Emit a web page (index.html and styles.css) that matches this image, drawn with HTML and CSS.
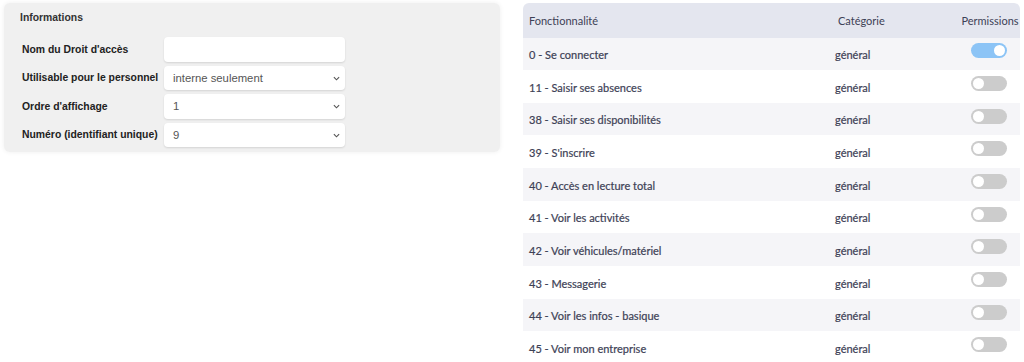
FILE: index.html
```html
<!DOCTYPE html>
<html lang="fr">
<head>
<meta charset="UTF-8">
<meta name="viewport" content="width=device-width, initial-scale=1.0">
<title>Droit d'accès</title>
<link rel="stylesheet" href="styles.css">
</head>
<body>
<div class="page">
 <!-- Informations -->
 <div class="panel">
 <h3 class="panel-title">Informations</h3>
 <div class="form">
 <label class="form-label" for="nom">Nom du Droit d'accès</label>
 <input class="field" id="nom" type="text" value="">

 <label class="form-label" for="usage">Utilisable pour le personnel</label>
 <div class="select">
 <select class="field" id="usage"><option>interne seulement</option></select>
 <svg class="chevron" viewBox="0 0 8 5"><path d="M1 1 L4 4 L7 1" /></svg>
 </div>

 <label class="form-label" for="ordre">Ordre d'affichage</label>
 <div class="select">
 <select class="field" id="ordre"><option>1</option></select>
 <svg class="chevron" viewBox="0 0 8 5"><path d="M1 1 L4 4 L7 1" /></svg>
 </div>

 <label class="form-label" for="numero">Numéro (identifiant unique)</label>
 <div class="select">
 <select class="field" id="numero"><option>9</option></select>
 <svg class="chevron" viewBox="0 0 8 5"><path d="M1 1 L4 4 L7 1" /></svg>
 </div>
 </div>
 </div>

 <!-- Permissions -->
 <table class="perms">
 <thead>
 <tr>
 <th class="col-nom">Fonctionnalité</th>
 <th class="col-cat">Catégorie</th>
 <th class="col-perm">Permissions</th>
 </tr>
 </thead>
 <tbody>
 <tr><td class="col-nom">0 - Se connecter</td><td class="col-cat">général</td><td class="col-perm"><span class="toggle on"></span></td></tr>
 <tr><td class="col-nom">11 - Saisir ses absences</td><td class="col-cat">général</td><td class="col-perm"><span class="toggle"></span></td></tr>
 <tr><td class="col-nom">38 - Saisir ses disponibilités</td><td class="col-cat">général</td><td class="col-perm"><span class="toggle"></span></td></tr>
 <tr><td class="col-nom">39 - S'inscrire</td><td class="col-cat">général</td><td class="col-perm"><span class="toggle"></span></td></tr>
 <tr><td class="col-nom">40 - Accès en lecture total</td><td class="col-cat">général</td><td class="col-perm"><span class="toggle"></span></td></tr>
 <tr><td class="col-nom">41 - Voir les activités</td><td class="col-cat">général</td><td class="col-perm"><span class="toggle"></span></td></tr>
 <tr><td class="col-nom">42 - Voir véhicules/matériel</td><td class="col-cat">général</td><td class="col-perm"><span class="toggle"></span></td></tr>
 <tr><td class="col-nom">43 - Messagerie</td><td class="col-cat">général</td><td class="col-perm"><span class="toggle"></span></td></tr>
 <tr><td class="col-nom">44 - Voir les infos - basique</td><td class="col-cat">général</td><td class="col-perm"><span class="toggle"></span></td></tr>
 <tr><td class="col-nom">45 - Voir mon entreprise</td><td class="col-cat">général</td><td class="col-perm"><span class="toggle"></span></td></tr>
 </tbody>
 </table>
</div>
</body>
</html>
```

FILE: styles.css
```css
body {
 margin: 0;
 background: #fff;
 font-family: "Liberation Sans", Arial, sans-serif;
}
.page {
 display: grid;
 grid-template-columns: 496px 497px;
 column-gap: 23px;
 align-items: start;
 padding: 3px 4px 0 4px;
}

/* Bloc informations */
.panel {
 background: #f0f0f0;
 border-radius: 6px;
 box-shadow: 0 0 5px rgba(0, 0, 0, 0.07);
 padding: 9px 0 6px 16px;
 height: 134px;
}
.panel-title {
 margin: 0 0 14px 0;
 font-size: 10.4px;
 font-weight: bold;
 color: #333;
}
.form {
 display: grid;
 grid-template-columns: 142px 181px;
 row-gap: 4px;
 align-items: center;
 padding-left: 2px;
}
.form-label {
 font-size: 10.4px;
 font-weight: bold;
 color: #222;
}
.field {
 box-sizing: border-box;
 width: 181px;
 height: 24.5px;
 border: none;
 border-radius: 4px;
 background: #fff;
 box-shadow: 0 1px 2px rgba(0, 0, 0, 0.12);
 padding: 0 0 0 9px;
 font-family: "Liberation Sans", Arial, sans-serif;
 font-size: 11.3px;
 color: #555;
 appearance: none;
 -webkit-appearance: none;
 outline: none;
}
.select {
 position: relative;
 height: 24.5px;
}
.chevron {
 position: absolute;
 right: 5px;
 top: 10px;
 width: 7px;
 height: 5px;
 fill: none;
 stroke: #555;
 stroke-width: 1.3;
}

/* Tableau des permissions */
.perms {
 border-collapse: separate;
 border-spacing: 0;
 width: 497px;
 font-family: Lato, "Open Sans", sans-serif;
 font-size: 11px;
 color: #3d4156;
}
.perms th {
 background: #e4e6ef;
 font-weight: normal;
 height: 33.5px;
 padding: 1px 0 0 0;
 text-align: left;
}
.perms th:first-child {
 border-top-left-radius: 6px;
}
.perms th:last-child {
 border-top-right-radius: 6px;
}
.perms td {
 height: 31.17px;
 padding: 1.5px 0 0 0;
 -webkit-text-stroke: 0.2px #3d4156;
}
.perms tbody tr:nth-child(odd) td {
 background: #f5f5f8;
}
.col-nom {
 width: 306px;
 padding-left: 6px !important;
}
.col-cat {
 width: 122px;
}
th.col-cat {
 padding-left: 3px !important;
}
.col-perm {
 text-align: center !important;
}
.toggle {
 display: inline-block;
 position: relative;
 top: -4px;
 left: -1px;
 width: 36px;
 height: 15px;
 border-radius: 8px;
 background: #cccccc;
 vertical-align: middle;
}
.toggle::after {
 content: "";
 position: absolute;
 left: 2px;
 top: 2px;
 width: 11px;
 height: 11px;
 border-radius: 50%;
 background: #fff;
}
.toggle.on {
 background: #8cc4f6;
}
.toggle.on::after {
 left: 23px;
}
```
